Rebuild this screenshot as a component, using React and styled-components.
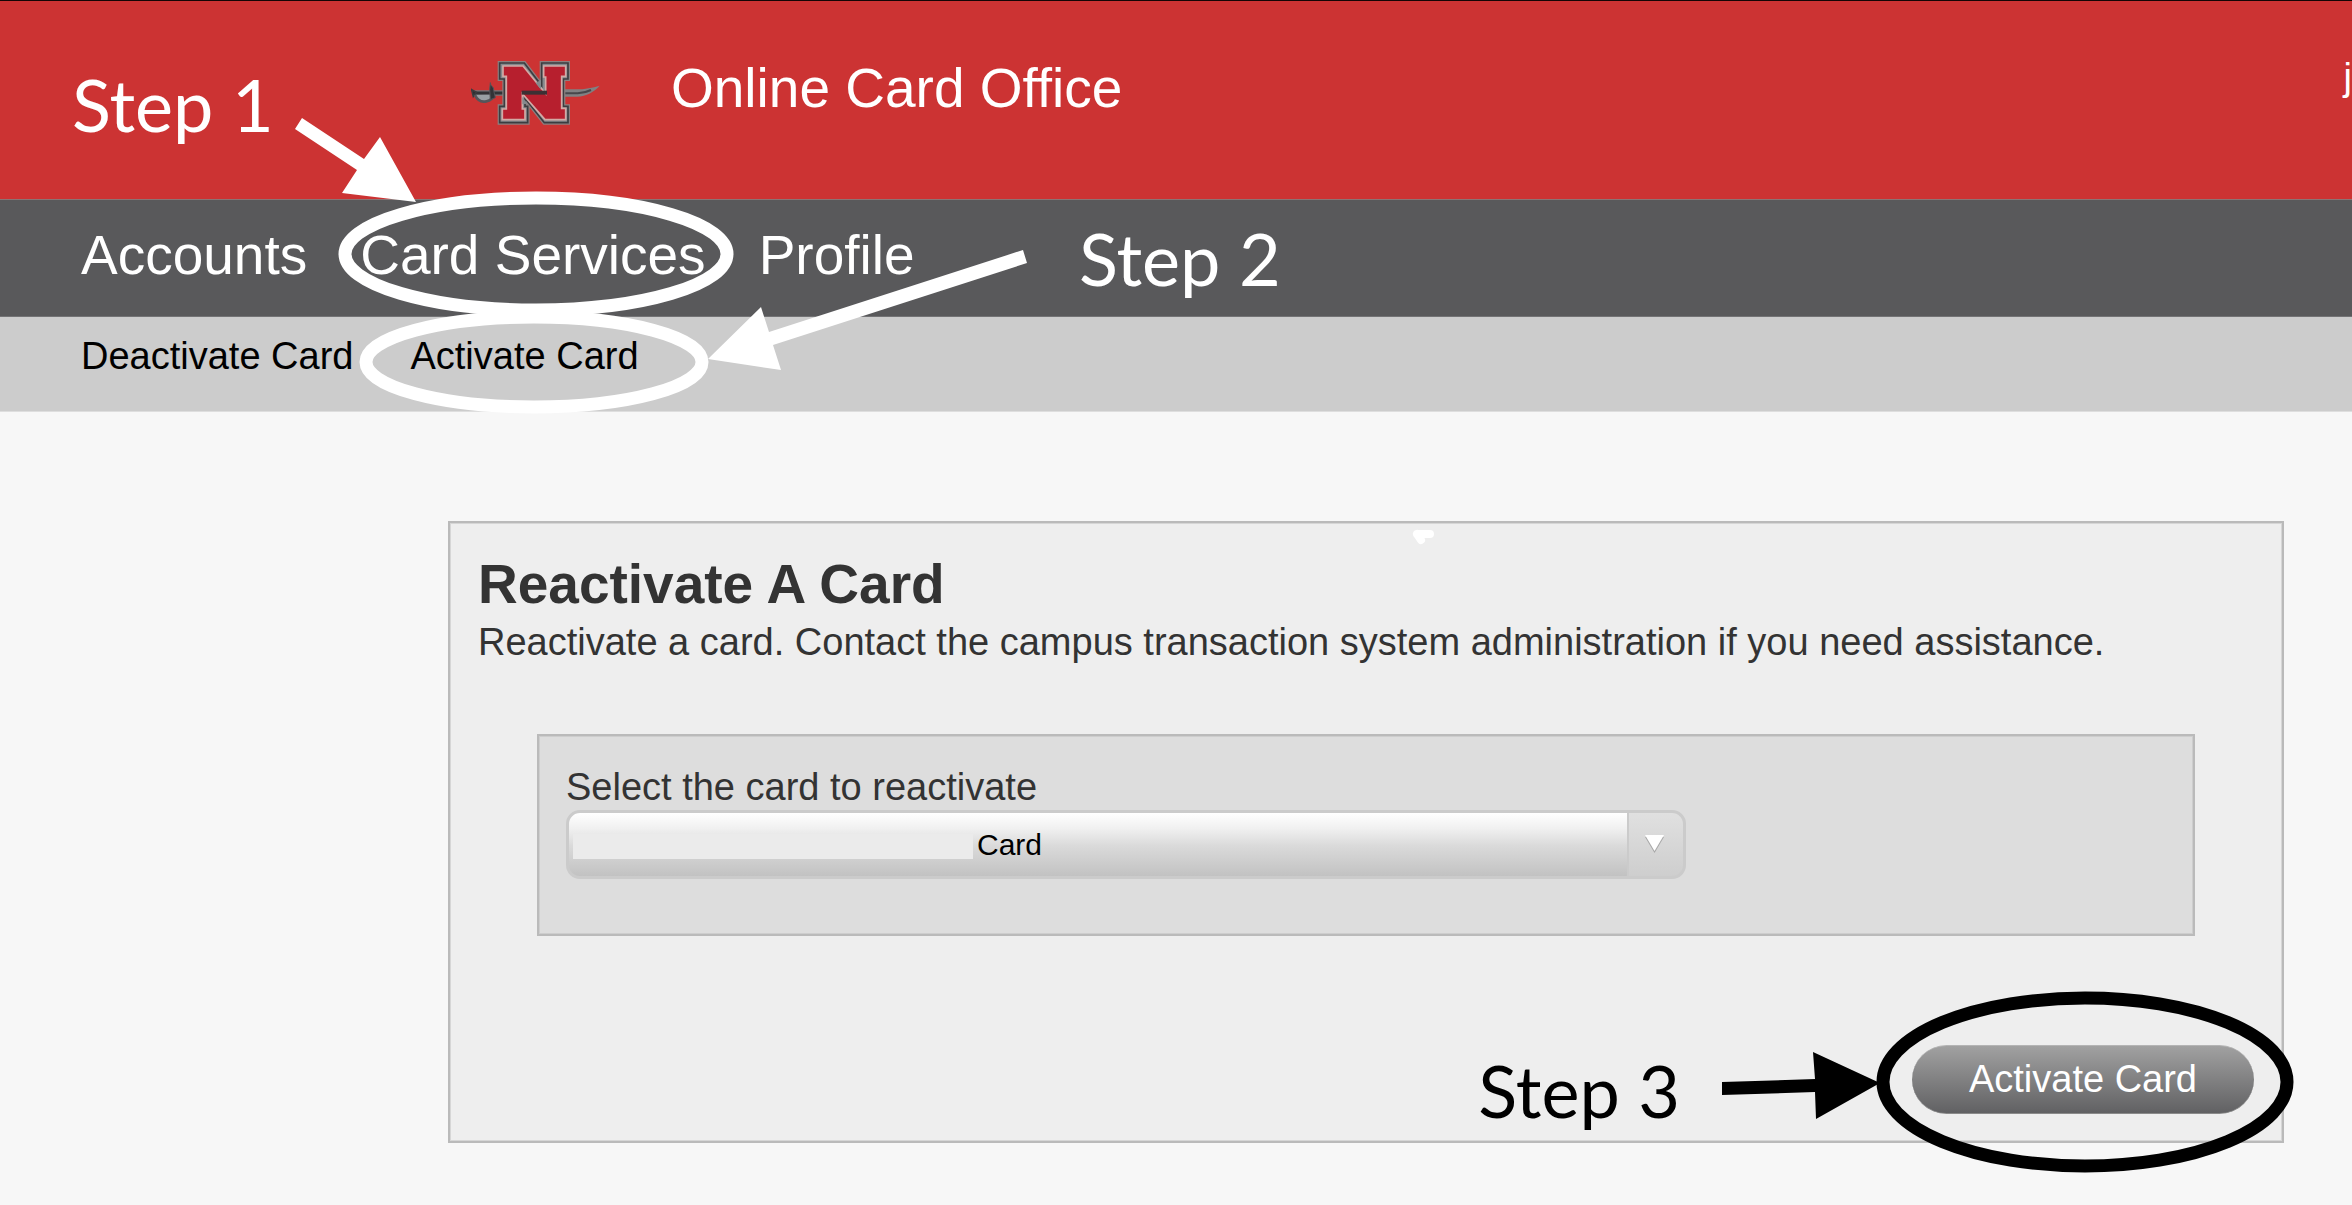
import React from 'react'
import styled, { createGlobalStyle } from 'styled-components'

const GlobalStyle = createGlobalStyle`
*, *::before, *::after{
box-sizing: border-box;
}
body{
margin: 0;
overflow-x: hidden;
background-color: #f7f7f7;
color: #333;
font-family: "Liberation Sans", Arial, sans-serif;
font-size: 38px;
line-height: 42px;
}
`
const Page = styled.div`
position: relative;
min-height: 100vh;
overflow: hidden;
`
const Header = styled.header`
display: flex;
align-items: flex-start;
padding: 55px 0 69px 471px;
background-color: #cc3333;
border-top: 1px solid #140505;
border-bottom: 1px solid #8a7474;
color: #fff;
`
const SiteName = styled.div`
margin-left: 70px;
font-size: 55px;
line-height: 64px;
`
const UserName = styled.a`
margin-left: auto;
color: #fff;
text-decoration: none;
`
const MainNav = styled.nav`
display: flex;
gap: 53px;
padding: 23px 81px 29px;
background-color: #59595b;
border-bottom: 1px solid #737375;
`
const MainLink = styled.a`
font-size: 55px;
line-height: 64px;
color: #fff;
text-decoration: none;
`
const SubNav = styled.nav`
display: flex;
gap: 57px;
padding: 18px 81px 34px;
background-color: #cccccc;
border-bottom: 1px solid #dedede;
`
const SubLink = styled.a`
color: #000;
text-decoration: none;
`
const Main = styled.main`
padding: 109px 68px 40px 448px;
`
const Panel = styled.form`
position: relative;
display: flex;
flex-direction: column;
padding: 29px 28px 27px;
background-color: #eeeeee;
border: 2px solid #bababa;
box-shadow: inset 0 0 0 1px #d6d6d6;
`
const Title = styled.h1`
margin: 0 0 5px;
font-size: 55px;
line-height: 64px;
font-weight: bold;
`
const Intro = styled.p`
margin: 0;
`
const CardField = styled.div`
display: flex;
flex-direction: column;
align-items: flex-start;
gap: 2px;
margin: 71px 59px 109px;
padding: 30px 27px 55px;
background-color: #dddddd;
border: 2px solid #bababa;
box-shadow: inset 0 0 0 1px #cdcdcd;
`
const SelectWrap = styled.div`
position: relative;
width: 70%;
`
const Select = styled.select`
display: block;
width: 100%;
height: 69px;
padding: 0 60px 0 408px;
appearance: none;
border: 3px solid #cbcbcb;
border-radius: 14px;
background:
linear-gradient(#cbcbcb, #cbcbcb) right 54px top / 2px 100% no-repeat,
linear-gradient(#e0e0e0, #cecece) right top / 54px 100% no-repeat,
linear-gradient(#ffffff, #f0f0f0 25%, #dadada 52%, #c2c2c2);
color: #000;
font-family: inherit;
font-size: 30px;
`
/* covers the card number */
const Mask = styled.span`
position: absolute;
top: 24px;
left: 7px;
width: 400px;
height: 25px;
background-color: #ebebeb;
pointer-events: none;
`
const Arrow = styled.svg`
position: absolute;
top: 24px;
right: 21px;
pointer-events: none;
`
const Submit = styled.button`
align-self: flex-end;
height: 69px;
padding: 0 57px;
border: 0;
border-top: 1px solid #b4b4b4;
border-bottom: 1px solid #8a8a8a;
border-radius: 35px;
background: linear-gradient(#a1a1a1, #616163);
color: #fff;
font-family: inherit;
font-size: 38px;
`
const Step = styled.span`
position: absolute;
top: ${props => props.$top};
right: ${props => props.$right};
bottom: ${props => props.$bottom};
left: ${props => props.$left};
color: ${props => props.$color || '#fff'};
font-family: Lato, "Liberation Sans", sans-serif;
font-size: 72px;
line-height: 96px;
white-space: nowrap;
pointer-events: none;
`
const NavMarks = styled.svg`
position: absolute;
top: 0;
left: 0;
pointer-events: none;
`
const SubmitMarks = styled.svg`
position: absolute;
right: -18px;
bottom: -38px;
pointer-events: none;
`
const Speck = styled.svg`
position: absolute;
top: 6px;
left: 962px;
`

const Logo = () => {
  const letter = 'M182 98H252L304 166V98H383V146H369V228H383V277H312L254 204V228H262V277H178V228H192V146H178V98Z'
  return (
    <svg width="130" height="74" viewBox="92 77 390 222" role="img" aria-label="Nicholls">
      <path d="M98 188H200" stroke="#77777a" strokeWidth="16" />
      <path d="M98 188H200" stroke="#333336" strokeWidth="9" />
      <path d="M94 178L108 186L99 198Z" fill="#2b2b2e" stroke="#3b3b3e" strokeWidth="5" />
      <path d="M104 194C112 212 124 216 138 213C150 211 158 204 161 193" fill="#9aa0a4" stroke="#55555a" strokeWidth="8" />
      <path d="M150 157C149 168 162 168 160 180L165 202L150 208L148 178Z" fill="#333337" stroke="#55555a" strokeWidth="3" />
      <path d="M362 177H405C436 177 456 172 478 166C462 184 438 198 410 199H362Z" fill="#808183" />
      <path d="M362 189H412C432 188 442 184 452 179" fill="none" stroke="#47474b" strokeWidth="6" />
      <path d={letter} fill="#77777a" stroke="#8c8080" strokeWidth="12" />
      <path d={letter} fill="#84898d" stroke="#3c3c40" strokeWidth="5" />
      <path d="M188 107H248L316 190V140H310V107H376V138H364V234H376V268H314L246 190V236H254V268H186V236H198V138H188Z" fill="#b71f2e" stroke="#d2aaa6" strokeWidth="5" />
      <path d="M244 181H320V193H244Z" fill="#3c3034" />
      <path d="M302 148V178L286 158Z" fill="#84898d" />
      <path d="M246 200V222L262 220Z" fill="#84898d" />
    </svg>
  )
}

function App() {
  return (
    <Page>
      <GlobalStyle />
      <Header>
        <Logo />
        <SiteName>Online Card Office</SiteName>
        <UserName href="#user">j</UserName>
      </Header>
      <MainNav>
        <MainLink href="#accounts">Accounts</MainLink>
        <MainLink href="#services">Card Services</MainLink>
        <MainLink href="#profile">Profile</MainLink>
      </MainNav>
      <SubNav>
        <SubLink href="#deactivate">Deactivate Card</SubLink>
        <SubLink href="#activate">Activate Card</SubLink>
      </SubNav>
      <Main>
        <Panel onSubmit={e => e.preventDefault()}>
          <Title>Reactivate A Card</Title>
          <Intro>Reactivate a card. Contact the campus transaction system administration if you need assistance.</Intro>
          <CardField>
            <label htmlFor="card">Select the card to reactivate</label>
            <SelectWrap>
              <Select id="card">
                <option>Card</option>
              </Select>
              <Mask />
              <Arrow width="21" height="20" viewBox="0 0 21 20" aria-hidden="true">
                <path d="M1 3H20L10.500 19Z" fill="#a8a8a8" />
                <path d="M1 1H20L10.500 17Z" fill="#fff" />
              </Arrow>
            </SelectWrap>
          </CardField>
          <Submit type="submit">Activate Card</Submit>

          <Speck width="24" height="18" viewBox="0 0 24 18" aria-hidden="true">
            <path d="M5 5H18M5 5L9 11" fill="none" stroke="#fff" strokeWidth="8" strokeLinecap="round" />
          </Speck>
          <Step $right="602px" $bottom="3px" $color="#000">Step 3</Step>
          <SubmitMarks width="584" height="195" viewBox="0 0 584 195" aria-hidden="true">
            <path d="M6 98L99 95L97 68L164 99L100 135L99 108L6 111Z" />
            <ellipse cx="369" cy="98" rx="202" ry="84" fill="none" stroke="#000" strokeWidth="13" />
          </SubmitMarks>
        </Panel>
      </Main>

      <NavMarks width="1040" height="420" viewBox="0 0 1040 420" fill="#fff" aria-hidden="true">
        <path d="M302 118L364 159L380 137L416 202L342 193L357 170L295 129Z" />
        <path d="M1023 250L769 332L761 307L708 359L781 370L773 345L1027 263Z" />
        <ellipse cx="536" cy="254" rx="191" ry="56" fill="none" stroke="#fff" strokeWidth="13" />
        <ellipse cx="534" cy="362" rx="168" ry="45" fill="none" stroke="#fff" strokeWidth="13" />
      </NavMarks>
      <Step $top="56px" $left="72px">Step 1</Step>
      <Step $top="210px" $left="1079px">Step 2</Step>
    </Page>
  )
}

export default App
